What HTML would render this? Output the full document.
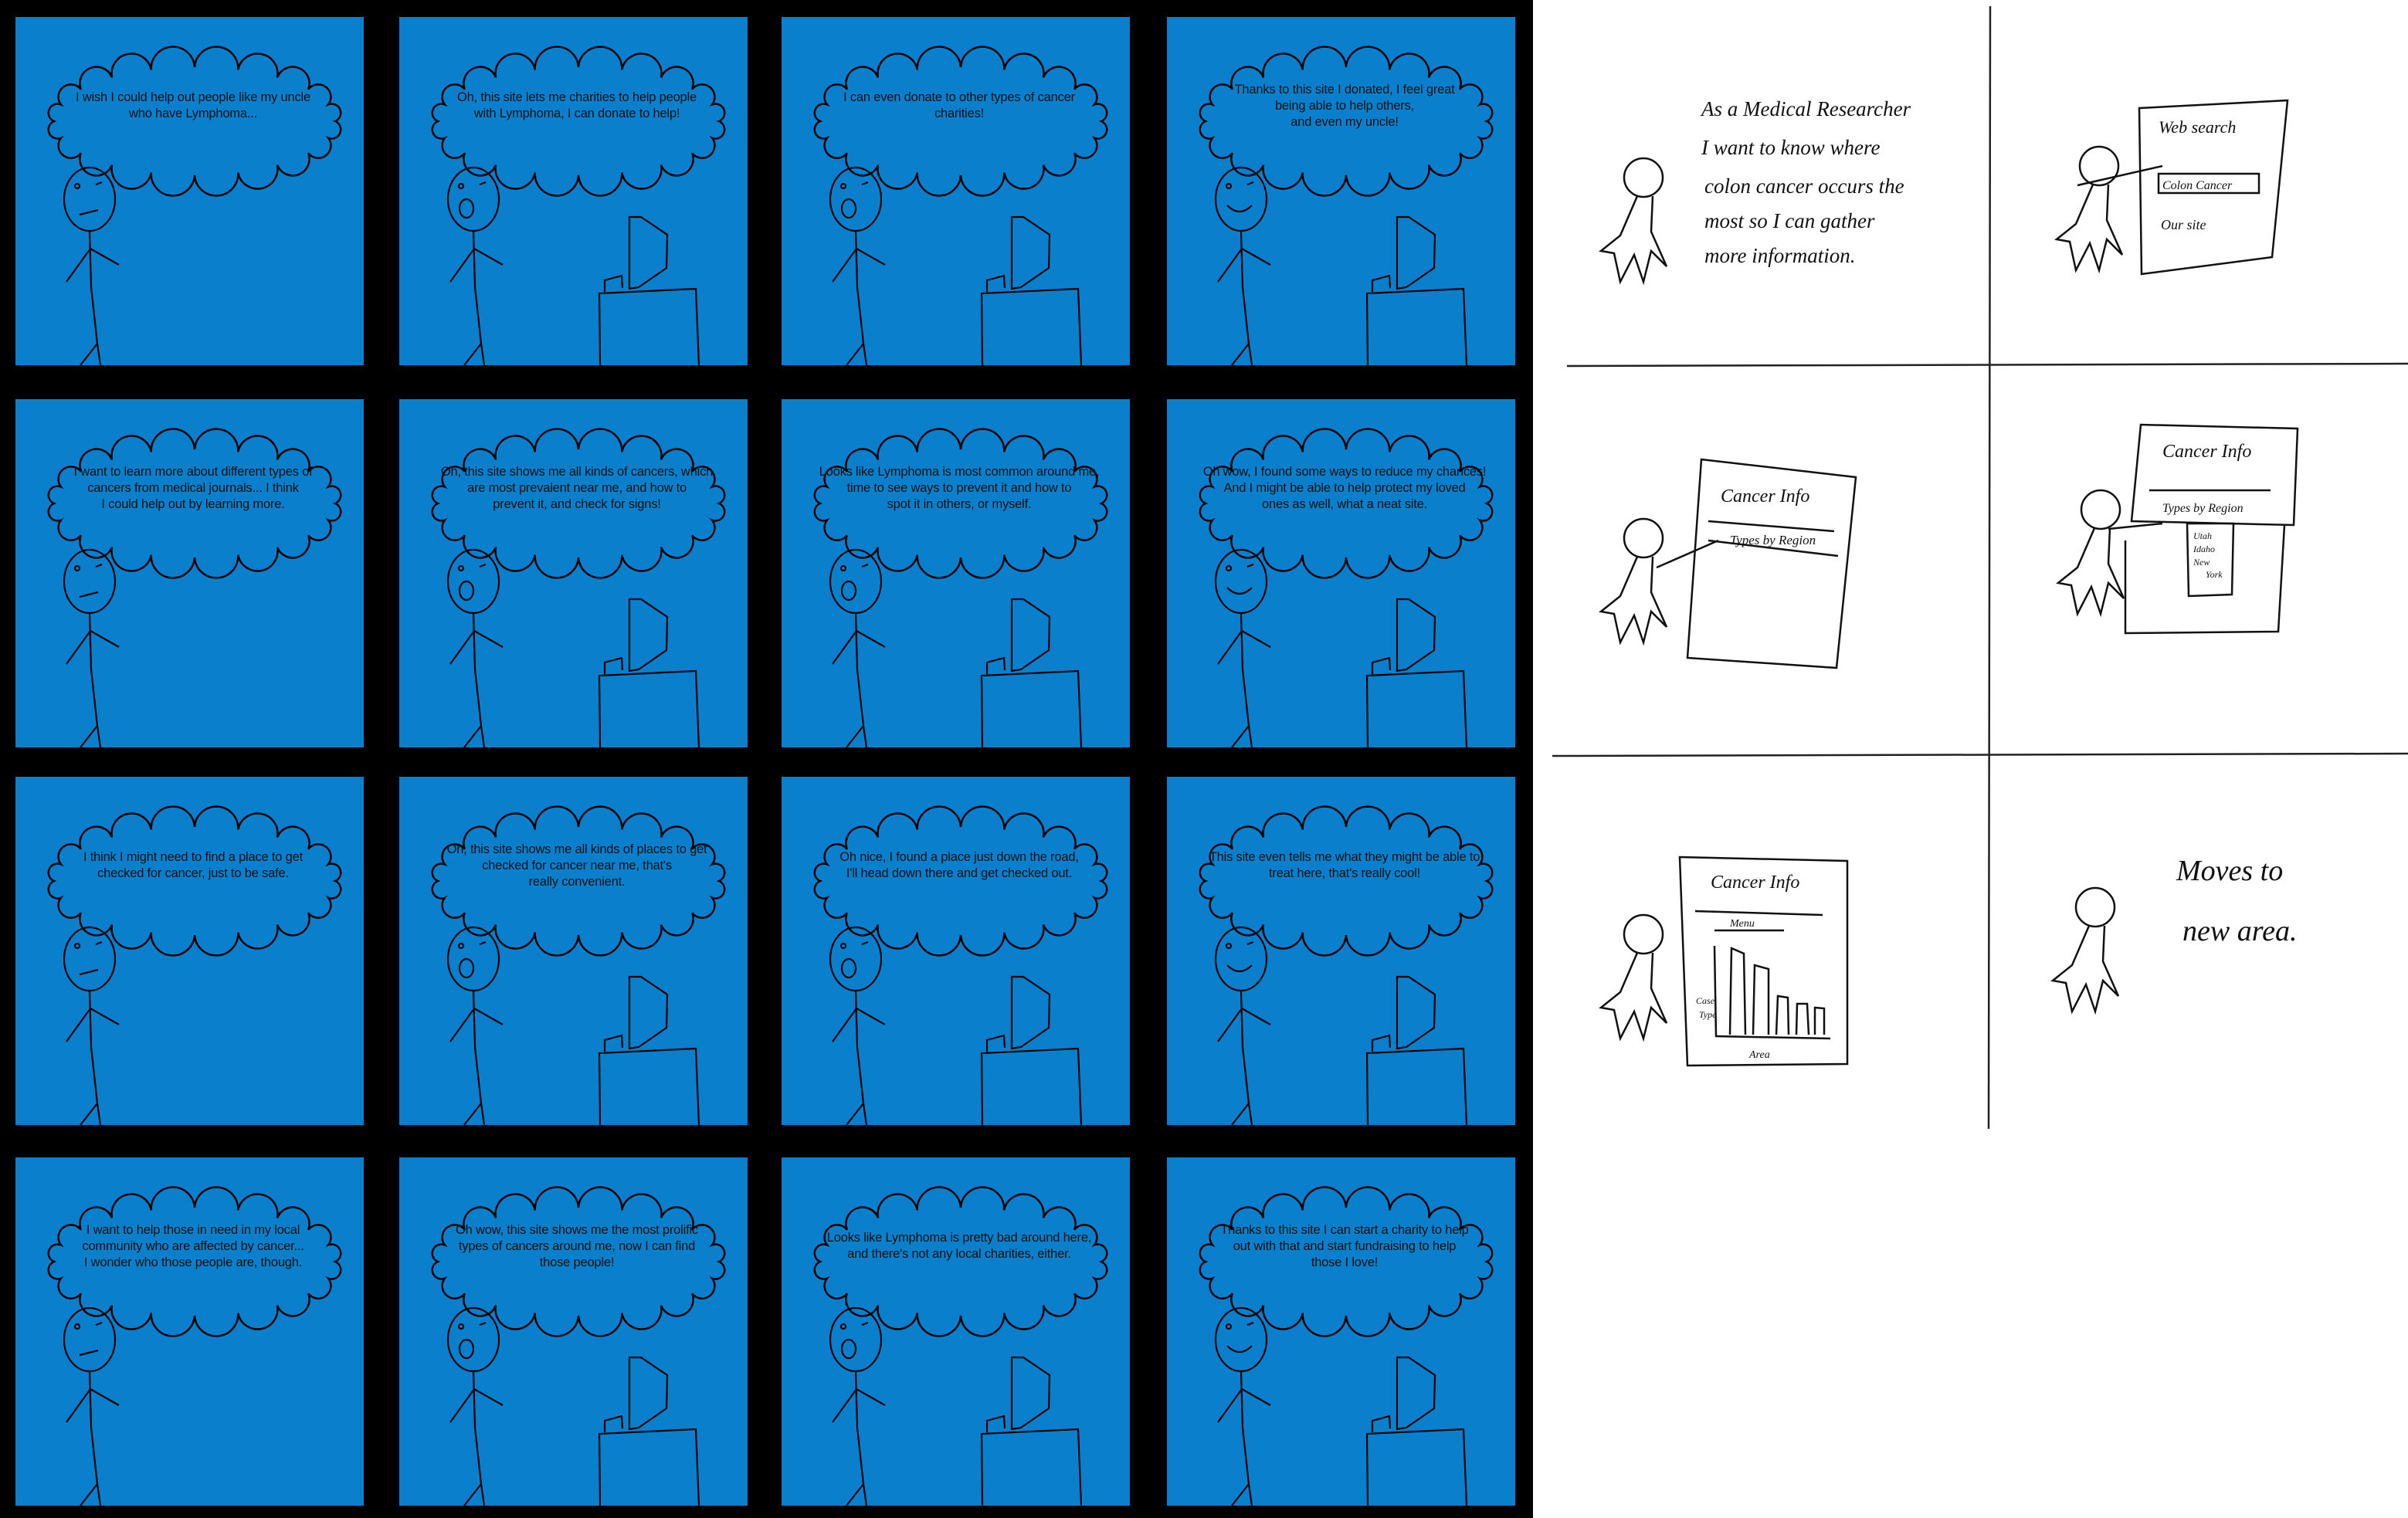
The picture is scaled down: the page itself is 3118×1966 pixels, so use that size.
<!DOCTYPE html>
<html><head><meta charset="utf-8"><style>
*{margin:0;padding:0;box-sizing:border-box}
body{width:3118px;height:1966px;background:#fff;position:relative;overflow:hidden;font-family:"Liberation Sans",sans-serif}
#black{position:absolute;left:0;top:0;width:1985px;height:1966px;background:#000}
.p{position:absolute;width:451px;height:451px;background:#0a80cd;overflow:hidden}
.p svg{position:absolute;left:0;top:0}
.t{position:absolute;left:20px;width:420px;top:94px;text-align:center;font-size:16.5px;line-height:21px;color:#111;white-space:nowrap;letter-spacing:-0.2px}
.t.l3{top:84px}
.hw{font-family:"Liberation Serif",serif;font-style:italic;fill:#111}
</style></head><body>
<div id="black"></div>
<svg width="0" height="0" style="position:absolute">
<defs>
<symbol id="cloud" viewBox="0 0 451 451"><path d="M414,135 A1,1 0 0,1 405.1,156.6 A1,1 0 0,1 379.2,176.2 A1,1 0 0,1 339,191.6 A1,1 0 0,1 288.2,201.6 A1,1 0 0,1 232,205 A1,1 0 0,1 175.8,201.6 A1,1 0 0,1 125,191.6 A1,1 0 0,1 84.8,176.2 A1,1 0 0,1 58.9,156.6 A1,1 0 0,1 50,135 A1,1 0 0,1 58.9,113.4 A1,1 0 0,1 84.8,93.8 A1,1 0 0,1 125,78.4 A1,1 0 0,1 175.8,68.4 A1,1 0 0,1 232,65 A1,1 0 0,1 288.2,68.4 A1,1 0 0,1 339,78.4 A1,1 0 0,1 379.2,93.8 A1,1 0 0,1 405.1,113.4 A1,1 0 0,1 414,135Z" fill="none" stroke="#000" stroke-width="2.5"/></symbol>
<symbol id="fig" viewBox="0 0 451 451"><g fill="none" stroke="#000" stroke-width="2.2"><ellipse cx="96" cy="236" rx="33" ry="41"/><path d="M96,277 L98,350 L106,423 L110,451 M106,423 L84,451 M97,300 L66,343 M97,300 L134,321"/><circle cx="80" cy="219" r="3"/><path d="M104,217 l8,-3"/></g></symbol>
<symbol id="comp" viewBox="0 0 451 451"><g fill="none" stroke="#000" stroke-width="2.2"><path d="M260,451 L259,358 L384,352 L388,451 M298,259 L313,259 L347,282 L346,325 L310,350 L298,352 Z M289,351 L288,335 L266,341 L266,356"/></g></symbol>
</defs></svg>

<!-- Row 1 -->
<div class="p" style="left:20px;top:22px"><svg width="451" height="451"><use href="#cloud"/><use href="#fig"/><path d="M83,256 l24,-6" stroke="#000" stroke-width="2.2"/></svg><div class="t">I wish I could help out people like my uncle<br>who have Lymphoma...</div></div>
<div class="p" style="left:517px;top:22px"><svg width="451" height="451"><use href="#cloud"/><use href="#fig"/><use href="#comp"/><ellipse cx="87" cy="248" rx="9" ry="12" fill="none" stroke="#000" stroke-width="2.2"/></svg><div class="t">Oh, this site lets me charities to help people<br>with Lymphoma, I can donate to help!</div></div>
<div class="p" style="left:1012px;top:22px"><svg width="451" height="451"><use href="#cloud"/><use href="#fig"/><use href="#comp"/><ellipse cx="87" cy="248" rx="9" ry="12" fill="none" stroke="#000" stroke-width="2.2"/></svg><div class="t">I can even donate to other types of cancer<br>charities!</div></div>
<div class="p" style="left:1511px;top:22px"><svg width="451" height="451"><use href="#cloud"/><use href="#fig"/><use href="#comp"/><path d="M78,244 q16,16 32,0" fill="none" stroke="#000" stroke-width="2.2"/></svg><div class="t l3">Thanks to this site I donated, I feel great<br>being able to help others,<br>and even my uncle!</div></div>

<!-- Row 2 -->
<div class="p" style="left:20px;top:517px"><svg width="451" height="451"><use href="#cloud"/><use href="#fig"/><path d="M83,256 l24,-6" stroke="#000" stroke-width="2.2"/></svg><div class="t l3">I want to learn more about different types of<br>cancers from medical journals... I think<br>I could help out by learning more.</div></div>
<div class="p" style="left:517px;top:517px"><svg width="451" height="451"><use href="#cloud"/><use href="#fig"/><use href="#comp"/><ellipse cx="87" cy="248" rx="9" ry="12" fill="none" stroke="#000" stroke-width="2.2"/></svg><div class="t l3">Oh, this site shows me all kinds of cancers, which<br>are most prevalent near me, and how to<br>prevent it, and check for signs!</div></div>
<div class="p" style="left:1012px;top:517px"><svg width="451" height="451"><use href="#cloud"/><use href="#fig"/><use href="#comp"/><ellipse cx="87" cy="248" rx="9" ry="12" fill="none" stroke="#000" stroke-width="2.2"/></svg><div class="t l3">Looks like Lymphoma is most common around me,<br>time to see ways to prevent it and how to<br>spot it in others, or myself.</div></div>
<div class="p" style="left:1511px;top:517px"><svg width="451" height="451"><use href="#cloud"/><use href="#fig"/><use href="#comp"/><path d="M78,244 q16,16 32,0" fill="none" stroke="#000" stroke-width="2.2"/></svg><div class="t l3">Oh wow, I found some ways to reduce my chances!<br>And I might be able to help protect my loved<br>ones as well, what a neat site.</div></div>

<!-- Row 3 -->
<div class="p" style="left:20px;top:1006px"><svg width="451" height="451"><use href="#cloud"/><use href="#fig"/><path d="M83,256 l24,-6" stroke="#000" stroke-width="2.2"/></svg><div class="t">I think I might need to find a place to get<br>checked for cancer, just to be safe.</div></div>
<div class="p" style="left:517px;top:1006px"><svg width="451" height="451"><use href="#cloud"/><use href="#fig"/><use href="#comp"/><ellipse cx="87" cy="248" rx="9" ry="12" fill="none" stroke="#000" stroke-width="2.2"/></svg><div class="t l3">Oh, this site shows me all kinds of places to get<br>checked for cancer near me, that's<br>really convenient.</div></div>
<div class="p" style="left:1012px;top:1006px"><svg width="451" height="451"><use href="#cloud"/><use href="#fig"/><use href="#comp"/><ellipse cx="87" cy="248" rx="9" ry="12" fill="none" stroke="#000" stroke-width="2.2"/></svg><div class="t">Oh nice, I found a place just down the road,<br>I'll head down there and get checked out.</div></div>
<div class="p" style="left:1511px;top:1006px"><svg width="451" height="451"><use href="#cloud"/><use href="#fig"/><use href="#comp"/><path d="M78,244 q16,16 32,0" fill="none" stroke="#000" stroke-width="2.2"/></svg><div class="t">This site even tells me what they might be able to<br>treat here, that's really cool!</div></div>

<!-- Row 4 -->
<div class="p" style="left:20px;top:1499px"><svg width="451" height="451"><use href="#cloud"/><use href="#fig"/><path d="M83,256 l24,-6" stroke="#000" stroke-width="2.2"/></svg><div class="t l3">I want to help those in need in my local<br>community who are affected by cancer...<br>I wonder who those people are, though.</div></div>
<div class="p" style="left:517px;top:1499px"><svg width="451" height="451"><use href="#cloud"/><use href="#fig"/><use href="#comp"/><ellipse cx="87" cy="248" rx="9" ry="12" fill="none" stroke="#000" stroke-width="2.2"/></svg><div class="t l3">Oh wow, this site shows me the most prolific<br>types of cancers around me, now I can find<br>those people!</div></div>
<div class="p" style="left:1012px;top:1499px"><svg width="451" height="451"><use href="#cloud"/><use href="#fig"/><use href="#comp"/><ellipse cx="87" cy="248" rx="9" ry="12" fill="none" stroke="#000" stroke-width="2.2"/></svg><div class="t">Looks like Lymphoma is pretty bad around here,<br>and there's not any local charities, either.</div></div>
<div class="p" style="left:1511px;top:1499px"><svg width="451" height="451"><use href="#cloud"/><use href="#fig"/><use href="#comp"/><path d="M78,244 q16,16 32,0" fill="none" stroke="#000" stroke-width="2.2"/></svg><div class="t l3">Thanks to this site I can start a charity to help<br>out with that and start fundraising to help<br>those I love!</div></div>

<!-- Right side sketches -->
<svg style="position:absolute;left:0;top:0" width="3118" height="1966">
<defs>
<g id="pers" fill="none" stroke="#111" stroke-width="2.5"><circle cx="0" cy="0" r="25"/><path d="M-8,24 L-30,75 L-55,95 L-38,98 L-30,135 L-12,100 L0,135 L10,95 L30,115 L10,70 L12,24"/></g>
</defs>
<g fill="none" stroke="#222" stroke-width="2.5">
<path d="M2577,8 L2575,1462"/>
<path d="M2029,474 L3118,471"/>
<path d="M2010,979 L3118,976"/>
</g>
<use href="#pers" x="2128" y="230"/>
<g class="hw" font-size="27">
<text x="2203" y="150">As a Medical Researcher</text>
<text x="2203" y="200">I want to know where</text>
<text x="2207" y="250">colon cancer occurs the</text>
<text x="2207" y="295">most so I can gather</text>
<text x="2207" y="340">more information.</text>
</g>
<use href="#pers" x="2718" y="215"/>
<g fill="none" stroke="#111" stroke-width="2.5">
<path d="M2770,140 L2962,130 L2942,333 L2773,355 Z"/>
<path d="M2795,225 L2925,225 L2925,250 L2795,250 Z"/>
<path d="M2690,240 L2800,215"/>
</g>
<g class="hw"><text x="2795" y="172" font-size="22">Web search</text><text x="2800" y="245" font-size="16">Colon Cancer</text><text x="2798" y="297" font-size="18">Our site</text></g>
<use href="#pers" x="2128" y="697"/>
<g fill="none" stroke="#111" stroke-width="2.5">
<path d="M2203,595 L2403,618 L2378,865 L2185,852 Z"/>
<path d="M2212,675 L2375,688 M2212,700 L2380,720 M2145,735 L2225,700"/>
</g>
<g class="hw"><text x="2228" y="650" font-size="24">Cancer Info</text><text x="2240" y="705" font-size="17">Types by Region</text></g>
<use href="#pers" x="2720" y="660"/>
<g fill="none" stroke="#111" stroke-width="2.5">
<path d="M2772,550 L2975,555 L2970,680 L2760,675 Z"/>
<path d="M2958,680 L2950,818 L2752,820 L2752,700"/>
<path d="M2832,678 L2892,678 L2890,770 L2834,772 Z"/>
<path d="M2783,635 L2940,635 M2730,685 L2800,678"/>
</g>
<g class="hw"><text x="2800" y="592" font-size="24">Cancer Info</text><text x="2800" y="663" font-size="16">Types by Region</text><text x="2840" y="698" font-size="12">Utah</text><text x="2840" y="715" font-size="12">Idaho</text><text x="2840" y="732" font-size="12">New</text><text x="2856" y="748" font-size="12">York</text></g>
<use href="#pers" x="2128" y="1210"/>
<g fill="none" stroke="#111" stroke-width="2.5">
<path d="M2175,1110 L2392,1115 L2392,1378 L2185,1380 Z"/>
<path d="M2195,1180 L2360,1185 M2220,1205 L2310,1205"/>
<path d="M2220,1225 L2222,1342 L2370,1345"/>
<path d="M2240,1340 L2242,1228 L2258,1235 L2260,1340 M2270,1340 L2272,1250 L2290,1255 L2290,1340 M2300,1340 L2302,1290 L2315,1292 L2316,1340 M2326,1340 L2327,1300 L2340,1300 L2342,1340 M2350,1340 L2350,1305 L2362,1306 L2362,1340"/>
</g>
<g class="hw"><text x="2215" y="1150" font-size="24">Cancer Info</text><text x="2240" y="1200" font-size="14">Menu</text><text x="2265" y="1370" font-size="14">Area</text><text x="2196" y="1300" font-size="12">Case</text><text x="2200" y="1318" font-size="12">Type</text></g>
<use href="#pers" x="2713" y="1175"/>
<g class="hw" font-size="38"><text x="2818" y="1140">Moves to</text><text x="2826" y="1218">new area.</text></g>
</svg>
</body></html>
